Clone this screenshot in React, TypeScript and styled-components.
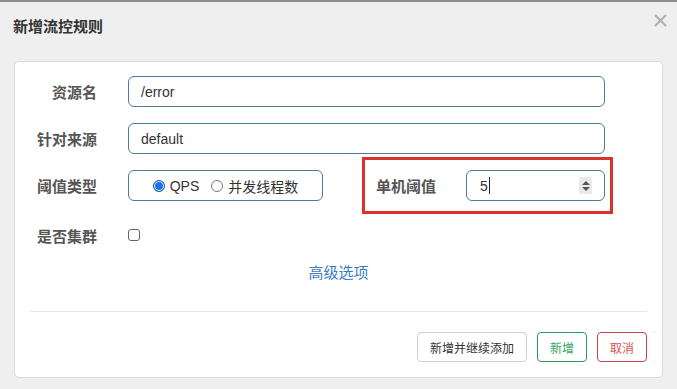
import styled, { createGlobalStyle } from 'styled-components';

const GlobalStyle = createGlobalStyle`
  html, body {
    margin: 0;
    padding: 0;
    background: #efefef;
    font-family: "Liberation Sans", "Noto Sans CJK SC", sans-serif;
  }
`;

const Modal = styled.div`
  width: 677px;
  height: 389px;
  box-sizing: border-box;
  border-top: 2px solid #8e8e8e;
  background: #efefef;
`;

const Header = styled.div`
  display: flex;
  justify-content: space-between;
  align-items: center;
  padding: 15px 10px 24px 13px;
`;

const Title = styled.h4`
  margin: 0;
  font-size: 15px;
  line-height: 20px;
  font-weight: 700;
  color: #333;
`;

const Close = styled.button`
  align-self: flex-start;
  margin-top: -3px;
  padding: 0;
  border: 0;
  background: none;
  width: 13px;
  height: 13px;
  display: flex;
  cursor: pointer;
`;

const Card = styled.div`
  margin: 0 14px;
  background: #fff;
  border: 1px solid #dcdcdc;
  border-radius: 5px;
  padding: 14px 15px 15px;
`;

const Row = styled.div`
  display: flex;
  align-items: center;
  gap: 31px;
  padding-right: 42px;
  min-height: 31px;
  & + & {
    margin-top: 16px;
  }
`;

const CheckRow = styled(Row)`
  && {
    margin-top: 22px;
  }
  min-height: 24px;
`;

const Label = styled.label`
  width: 67px;
  flex: none;
  text-align: right;
  font-size: 15px;
  font-weight: 700;
  color: #555;
  white-space: nowrap;
`;

const TextInput = styled.input`
  flex: 1;
  height: 31px;
  box-sizing: border-box;
  border: 1px solid #4d7b98;
  border-radius: 6px;
  padding: 0 12px;
  font-family: inherit;
  font-size: 14px;
  color: #333;
  outline: none;
`;

const RadioGroup = styled.div`
  width: 195px;
  height: 31px;
  box-sizing: border-box;
  flex: none;
  border: 1px solid #4d7b98;
  border-radius: 6px;
  display: flex;
  align-items: center;
  justify-content: center;
  gap: 12px;
  font-size: 14px;
  color: #333;
`;

const RadioOption = styled.span`
  display: flex;
  align-items: center;
  gap: 5px;
`;

const RadioDot = styled.span<{ $checked?: boolean }>`
  width: 12px;
  height: 12px;
  box-sizing: border-box;
  border-radius: 50%;
  border: 1px solid ${(p) => (p.$checked ? '#1761c9' : '#777')};
  background: ${(p) => (p.$checked ? '#1a73e8' : '#fff')};
  box-shadow: ${(p) => (p.$checked ? 'inset 0 0 0 1px #fff' : 'none')};
`;

const Highlight = styled.div`
  flex: none;
  display: flex;
  align-items: center;
  border: 3px solid #d8322b;
  padding: 10px 5px 10px 11px;
  margin: -13px -8px -13px 8px;
`;

const InlineLabel = styled.label`
  width: 90px;
  font-size: 15px;
  font-weight: 700;
  color: #555;
`;

const NumberBox = styled.div`
  width: 139px;
  height: 31px;
  box-sizing: border-box;
  border: 1px solid #4d7b98;
  border-radius: 6px;
  display: flex;
  align-items: center;
  padding: 0 12px 0 13px;
  font-size: 14px;
  color: #333;
`;

const Caret = styled.span`
  width: 1px;
  height: 17px;
  background: #222;
  margin-left: 1px;
`;

const Spinner = styled.span`
  margin-left: auto;
  width: 13px;
  height: 17px;
  border-radius: 2px;
  background: #e9e9e9;
  display: flex;
  flex-direction: column;
  align-items: center;
  justify-content: center;
  gap: 2px;
`;

const Arrow = styled.span<{ $down?: boolean }>`
  width: 0;
  height: 0;
  border-left: 4px solid transparent;
  border-right: 4px solid transparent;
  ${(p) => (p.$down ? 'border-top: 4px solid #555;' : 'border-bottom: 4px solid #555;')}
`;

const CheckBox = styled.span`
  width: 12px;
  height: 12px;
  box-sizing: border-box;
  border: 1px solid #666;
  border-radius: 3px;
  background: #fff;
`;

const Advanced = styled.div`
  text-align: center;
  padding: 16px 0 28px;
  font-size: 15px;
  line-height: 20px;
  color: #3a7bbf;
  cursor: pointer;
`;

const Divider = styled.div`
  height: 1px;
  background: #e6e6e6;
`;

const Footer = styled.div`
  display: flex;
  justify-content: flex-end;
  gap: 10px;
  padding-top: 20px;
`;

const Button = styled.button<{ $tone?: 'green' | 'red' }>`
  height: 30px;
  padding: 0 12px;
  background: #fff;
  border-radius: 4px;
  font-family: inherit;
  font-size: 12px;
  border: 1px solid
    ${(p) => (p.$tone === 'green' ? '#2f9a5a' : p.$tone === 'red' ? '#c7424e' : '#cfcfcf')};
  color: ${(p) => (p.$tone === 'green' ? '#36a35f' : p.$tone === 'red' ? '#d9534f' : '#333')};
`;

export default function App() {
  return (
    <>
      <GlobalStyle />
      <Modal>
        <Header>
          <Title>新增流控规则</Title>
          <Close aria-label="close">
            <svg width="13" height="13" viewBox="0 0 13 13">
              <path d="M1 1 L12 12 M12 1 L1 12" stroke="#b3b3b3" strokeWidth="2.4" />
            </svg>
          </Close>
        </Header>
        <Card>
          <Row>
            <Label>资源名</Label>
            <TextInput defaultValue="/error" />
          </Row>
          <Row>
            <Label>针对来源</Label>
            <TextInput defaultValue="default" />
          </Row>
          <Row>
            <Label>阈值类型</Label>
            <RadioGroup>
              <RadioOption>
                <RadioDot $checked />
                QPS
              </RadioOption>
              <RadioOption>
                <RadioDot />
                并发线程数
              </RadioOption>
            </RadioGroup>
            <Highlight>
              <InlineLabel>单机阈值</InlineLabel>
              <NumberBox>
                5
                <Caret />
                <Spinner>
                  <Arrow />
                  <Arrow $down />
                </Spinner>
              </NumberBox>
            </Highlight>
          </Row>
          <CheckRow>
            <Label>是否集群</Label>
            <CheckBox />
          </CheckRow>
          <Advanced>高级选项</Advanced>
          <Divider />
          <Footer>
            <Button>新增并继续添加</Button>
            <Button $tone="green">新增</Button>
            <Button $tone="red">取消</Button>
          </Footer>
        </Card>
      </Modal>
    </>
  );
}
